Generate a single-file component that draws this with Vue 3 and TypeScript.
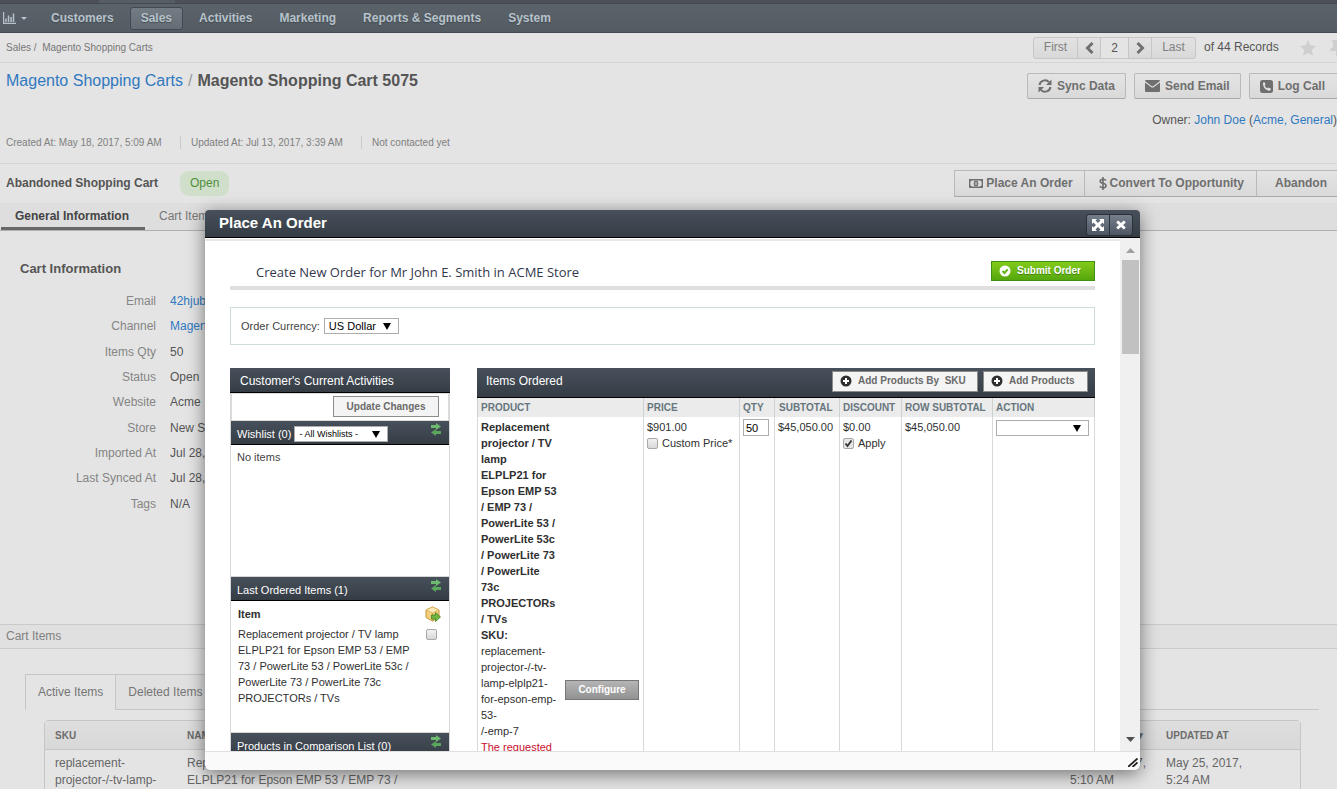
<script setup lang="ts">
import { ref } from 'vue'

interface Field {
  label: string
  value: string
  link?: boolean
}

const menu: string[] = ['Customers', 'Sales', 'Activities', 'Marketing', 'Reports & Segments', 'System']
const currentMenu = ref('Sales')

const fields: Field[] = [
  { label: 'Email', value: '42hjub@example.com', link: true },
  { label: 'Channel', value: 'Magento Channel', link: true },
  { label: 'Items Qty', value: '50' },
  { label: 'Status', value: 'Open' },
  { label: 'Website', value: 'Acme' },
  { label: 'Store', value: 'New Store' },
  { label: 'Imported At', value: 'Jul 28, 2017' },
  { label: 'Last Synced At', value: 'Jul 28, 2017' },
  { label: 'Tags', value: 'N/A' },
]

const productName = [
  'Replacement', 'projector / TV', 'lamp', 'ELPLP21 for', 'Epson EMP 53', '/ EMP 73 /',
  'PowerLite 53 /', 'PowerLite 53c', '/ PowerLite 73', '/ PowerLite', '73c', 'PROJECTORs', '/ TVs', 'SKU:',
].join('\n')
const productSku = ['replacement-', 'projector-/-tv-', 'lamp-elplp21-', 'for-epson-emp-', '53-', '/-emp-7'].join('\n')
const orderedItem = [
  'Replacement projector / TV lamp', 'ELPLP21 for Epson EMP 53 / EMP', '73 / PowerLite 53 / PowerLite 53c /',
  'PowerLite 73 / PowerLite 73c', 'PROJECTORs / TVs',
].join('\n')

const page = ref('2')
const qty = ref('50')
const customPrice = ref(false)
const applyDiscount = ref(true)
const reorder = ref(false)
</script>

<template>
  <div class="page">
    <header class="top">
      <div class="strip"></div>
      <nav class="nav">
        <a href="#" class="dash" aria-label="Dashboards">
          <svg width="13" height="12" viewBox="0 0 13 12"><path d="M.5 0v11.500H13M3 10V6.500M5.500 10V3.500M8 10V5M10.500 10V1.500" fill="none" stroke="currentColor" stroke-width="1.500" /></svg>
          <svg width="6" height="3" viewBox="0 0 6 3"><path d="M0 0h6L3 3z" fill="currentColor" /></svg>
        </a>
        <a v-for="m in menu" :key="m" href="#" class="item" :class="{ on: m === currentMenu }" @click.prevent="currentMenu = m">{{ m }}</a>
      </nav>
    </header>

    <div class="crumbs">
      <div><a href="#">Sales</a> /&nbsp; <a href="#">Magento Shopping Carts</a></div>
      <div class="pager">
        <button class="first">First</button>
        <button class="arrow" aria-label="Previous"><svg width="9" height="12" viewBox="0 0 9 12"><path d="M7.500 1L2.500 6l5 5" fill="none" stroke="#707070" stroke-width="3" /></svg></button>
        <input v-model="page" aria-label="Page number" />
        <button class="arrow" aria-label="Next"><svg width="9" height="12" viewBox="0 0 9 12"><path d="M1.500 1l5 5-5 5" fill="none" stroke="#707070" stroke-width="3" /></svg></button>
        <button class="last">Last</button>
        <span class="of">of 44 Records</span>
        <svg class="star" width="16" height="16" viewBox="0 0 16 16"><path d="M8 0l2.400 5.300 5.600.7-4.200 3.900 1.200 5.800L8 12.900l-5 2.800 1.200-5.800L0 6l5.600-.7z" fill="#cfcfcf" /></svg>
        <svg width="7" height="16" viewBox="0 0 7 16"><path d="M2 0h5v16H6v-5H0q0-3 3-4V2H2z" fill="#cfcfcf" /></svg>
      </div>
    </div>

    <div class="heading">
      <div class="head-left">
        <h1><a href="#">Magento Shopping Carts</a><i>/</i>Magento Shopping Cart 5075</h1>
        <ul>
          <li>Created At: May 18, 2017, 5:09 AM</li>
          <li>Updated At: Jul 13, 2017, 3:39 AM</li>
          <li>Not contacted yet</li>
        </ul>
      </div>
      <div class="head-right">
        <div class="tools">
          <button class="btn">
            <svg width="14" height="14" viewBox="0 0 14 14"><path d="M1.500 6A5.500 5.500 0 0 1 11 3.200M12.500 8A5.500 5.500 0 0 1 3 10.800" fill="none" stroke="currentColor" stroke-width="2" /><path d="M13.500.500V6H8zM.5 13.500V8H6z" fill="currentColor" /></svg>
            Sync Data
          </button>
          <button class="btn">
            <svg width="15" height="12" viewBox="0 0 15 12"><path d="M0 1q0-1 1-1h13q1 0 1 1L8.500 6q-1 .7-2 0z" fill="currentColor" /><path d="M0 2.500L6 7q1.500 1 3 0l6-4.500V11q0 1-1 1H1q-1 0-1-1z" fill="currentColor" /></svg>
            Send Email
          </button>
          <button class="btn cut">
            <svg width="13" height="13" viewBox="0 0 13 13"><rect width="13" height="13" rx="2.500" fill="currentColor" /><path d="M3 3.200Q3 2.300 4.300 2l1.300 2.600-1 1Q5.300 7.300 7.300 8.400l1-1L11 8.700Q10.700 10.300 9.500 10.700 7 11 4.800 8.600 2.800 6.200 3 3.200z" fill="#e4e4e4" /></svg>
            Log Call
          </button>
        </div>
        <div class="owner">Owner: <a href="#">John Doe</a> (<a href="#">Acme, General</a>)</div>
      </div>
    </div>

    <div class="status">
      <div class="status-left"><strong>Abandoned Shopping Cart</strong><span class="pill">Open</span></div>
      <div class="flow">
        <button class="btn place">
          <svg width="14" height="9" viewBox="0 0 14 9"><path d="M.7.700h12.600v7.600H.7z" fill="none" stroke="currentColor" stroke-width="1.400" /><ellipse cx="7" cy="4.500" rx="2.300" ry="3" fill="currentColor" /><path d="M7 3v3" stroke="#e4e4e4" /><path d="M1 1h2L1 3zM13 1h-2l2 2zM1 8h2L1 6zM13 8h-2l2-2z" fill="currentColor" /></svg>
          Place An Order
        </button>
        <button class="btn convert">
          <svg width="8" height="13" viewBox="0 0 8 13"><path d="M4 0v13M7 3.500Q6 2.200 4 2.200 1.200 2.200 1.200 4.200 1.200 5.800 4 6.300 7 6.900 7 8.800 7 10.800 4 10.800 2 10.800 .8 9.300" fill="none" stroke="currentColor" stroke-width="1.600" /></svg>
          Convert To Opportunity
        </button>
        <button class="btn cut abandon">Abandon</button>
      </div>
    </div>

    <div class="tabs"><a href="#" class="on">General Information</a><a href="#">Cart Items</a></div>

    <section class="info">
      <h2>Cart Information</h2>
      <dl>
        <template v-for="f in fields" :key="f.label">
          <dt>{{ f.label }}</dt>
          <dd><a v-if="f.link" href="#">{{ f.value }}</a><template v-else>{{ f.value }}</template></dd>
        </template>
      </dl>
    </section>

    <section class="cart">
      <h2>Cart Items</h2>
      <div class="subtabs"><a href="#" class="on">Active Items</a><a href="#">Deleted Items</a></div>
      <div class="grid">
        <table>
          <colgroup><col class="c1" /><col /><col class="c3" /><col class="c4" /></colgroup>
          <thead><tr><th>SKU</th><th>NAME</th><th>CREATED AT ▼</th><th>UPDATED AT</th></tr></thead>
          <tbody>
            <tr>
              <td>replacement-<br />projector-/-tv-lamp-</td>
              <td>Replacement projector / TV lamp<br />ELPLP21 for Epson EMP 53 / EMP 73 /</td>
              <td>May 25, 2017,<br />5:10 AM</td>
              <td>May 25, 2017,<br />5:24 AM</td>
            </tr>
          </tbody>
        </table>
      </div>
    </section>

    <div class="modal" role="dialog" aria-labelledby="dialog-title">
      <div class="bar">
        <h2 id="dialog-title">Place An Order</h2>
        <div class="winbtns">
          <button aria-label="Maximize"><svg width="12" height="12" viewBox="0 0 12 12"><path d="M0 0h5L3.500 1.500 6 4l2.500-2.500L7 0h5v5l-1.500-1.500L8 6l2.500 2.500L12 7v5H7l1.500-1.500L6 8l-2.500 2.500L5 12H0V7l1.500 1.500L4 6 1.500 3.500 0 5z" fill="#fff" /></svg></button>
          <button aria-label="Close"><svg width="10" height="10" viewBox="0 0 10 10"><path d="M1.200 1.500l7.600 7M8.800 1.500l-7.600 7" stroke="#fff" stroke-width="3" /></svg></button>
        </div>
      </div>

      <div class="viewport">
        <div class="content">
          <div class="order-head">
            <h3>Create New Order for Mr John E. Smith in ACME Store</h3>
            <button class="submit">
              <svg width="12" height="12" viewBox="0 0 12 12"><circle cx="6" cy="6" r="5.500" fill="#fff" /><path d="M3.500 6l2 2 3.200-3.700" fill="none" stroke="#62b515" stroke-width="2" /></svg>
              Submit Order
            </button>
          </div>
          <div class="currency">
            <label for="currency">Order Currency:</label>
            <span class="drop usd"><select id="currency"><option>US Dollar</option></select></span>
          </div>

          <div class="cols">
            <aside>
              <h4>Customer's Current Activities</h4>
              <div class="side">
                <div class="update"><button class="plain change">Update Changes</button></div>
                <div class="sub">
                  <label for="wish">Wishlist (0)</label>
                  <span class="drop wish"><select id="wish"><option>- All Wishlists -</option></select></span>
                  <button class="refresh" aria-label="Refresh wishlist"><svg width="12" height="13" viewBox="0 0 12 13"><path d="M1 2h5V0l5 3.500L6 7V5H1z" fill="#6cba70" /><path d="M11 8H6V6L1 9.500 6 13v-2h5z" fill="#5aa65c" /></svg></button>
                </div>
                <div class="empty">No items</div>
                <div class="sub lined">
                  <span>Last Ordered Items (1)</span>
                  <button class="refresh" aria-label="Refresh last ordered items"><svg width="12" height="13" viewBox="0 0 12 13"><path d="M1 2h5V0l5 3.500L6 7V5H1z" fill="#6cba70" /><path d="M11 8H6V6L1 9.500 6 13v-2h5z" fill="#5aa65c" /></svg></button>
                </div>
                <div class="last-items">
                  <div class="row">
                    <b>Item</b>
                    <svg width="16" height="16" viewBox="0 0 16 16"><path d="M7.500 1L14 4v7.500L7.500 15 1 11.500V4z" fill="#f3cf7d" stroke="#c99638" /><path d="M7.500 1L14 4 7.500 7 1 4z" fill="#fbe9b8" stroke="#d8ab52" stroke-width=".8" /><path d="M7.500 7v8" stroke="#d8ab52" /><path d="M6.500 9h4V6.500L15.500 11l-5 4.500V13h-4z" fill="#6fb53f" stroke="#3c8422" stroke-width=".8" /></svg>
                  </div>
                  <div class="row">
                    <label for="reorder" class="pre">{{ orderedItem }}</label>
                    <input id="reorder" v-model="reorder" type="checkbox" class="chk" />
                  </div>
                </div>
                <div class="sub lined">
                  <span>Products in Comparison List (0)</span>
                  <button class="refresh" aria-label="Refresh comparison list"><svg width="12" height="13" viewBox="0 0 12 13"><path d="M1 2h5V0l5 3.500L6 7V5H1z" fill="#6cba70" /><path d="M11 8H6V6L1 9.500 6 13v-2h5z" fill="#5aa65c" /></svg></button>
                </div>
              </div>
            </aside>

            <div class="ordered">
              <div class="ordered-head">
                <h4>Items Ordered</h4>
                <button class="plain add wide"><svg width="12" height="12" viewBox="0 0 12 12"><circle cx="6" cy="6" r="5.500" fill="#2f2f2f" /><path d="M6 3v6M3 6h6" stroke="#fff" stroke-width="2" /></svg>Add Products By&nbsp; SKU</button>
                <button class="plain add"><svg width="12" height="12" viewBox="0 0 12 12"><circle cx="6" cy="6" r="5.500" fill="#2f2f2f" /><path d="M6 3v6M3 6h6" stroke="#fff" stroke-width="2" /></svg>Add Products</button>
              </div>
              <table>
                <colgroup><col class="w-prod" /><col class="w-price" /><col class="w-qty" /><col class="w-sub" /><col class="w-disc" /><col class="w-row" /><col /></colgroup>
                <thead><tr><th>PRODUCT</th><th>PRICE</th><th>QTY</th><th>SUBTOTAL</th><th>DISCOUNT</th><th>ROW SUBTOTAL</th><th>ACTION</th></tr></thead>
                <tbody>
                  <tr>
                    <td>
                      <div class="product">
                        <div class="pre"><b>{{ productName }}</b><br />{{ productSku }}<br /><span class="error">The requested</span></div>
                        <button class="configure">Configure</button>
                      </div>
                    </td>
                    <td>$901.00<label class="tick"><input v-model="customPrice" type="checkbox" class="chk" />Custom Price*</label></td>
                    <td><input v-model="qty" class="qty" aria-label="Quantity" /></td>
                    <td>$45,050.00</td>
                    <td>$0.00<label class="tick"><input v-model="applyDiscount" type="checkbox" class="chk" />Apply</label></td>
                    <td>$45,050.00</td>
                    <td><span class="drop action"><select aria-label="Action"><option></option></select></span></td>
                  </tr>
                </tbody>
              </table>
            </div>
          </div>
        </div>
        <div class="scroll">
          <svg width="9" height="5" viewBox="0 0 9 5"><path d="M0 5h9L4.500 0z" fill="#a0a0a0" /></svg>
          <div class="thumb"></div>
          <svg class="down" width="9" height="5" viewBox="0 0 9 5"><path d="M0 0h9L4.500 5z" fill="#505050" /></svg>
        </div>
      </div>
      <div class="foot">
        <svg width="10" height="9" viewBox="0 0 10 9"><path d="M0 9l9.500-8.500M4.500 9l5-4.500" stroke="#222" stroke-width="1.800" /></svg>
      </div>
    </div>
  </div>
</template>

<style>
html, body { margin: 0; background: #e4e4e4; }
</style>

<style scoped>
* { box-sizing: border-box; }
.page { position: relative; height: 100vh; overflow: hidden; background: #e4e4e4; color: #555; font: 12px/17px "Liberation Sans", Arial, sans-serif; }
a { color: #3079c0; text-decoration: none; }
h1, h2, h3, h4, ul, dl, dd { margin: 0; padding: 0; }
button, input, select { font: inherit; margin: 0; border-radius: 0; }
svg { flex: none; }

.strip { height: 4px; background: linear-gradient(90deg, #4e5058 99px, #565d65 99px, #565d65 175px, #4e5058 175px); border-bottom: 1px solid #434a52; }
.nav { display: flex; align-items: center; gap: 5px; height: 29px; padding-left: 3px; background: linear-gradient(#5b636a, #555b62); border-bottom: 1px solid #444b53; }
.nav a { color: #b7c3cb; font-weight: bold; }
.dash { display: flex; align-items: center; gap: 5px; width: 32px; }
.item { padding: 1px 10px 2px; border: 1px solid transparent; border-radius: 3px; line-height: 18px; text-shadow: 0 1px 1px #444b53; }
.item.on { background: linear-gradient(#737b84, #656c74); border-color: #42484f; }

.crumbs { display: flex; justify-content: space-between; align-items: center; height: 30px; padding-left: 6px; border-bottom: 1px solid #d6d6d6; font-size: 10px; }
.crumbs a { color: #777; }
.crumbs > div:first-child { color: #777; }
.pager { display: flex; align-items: center; font-size: 12px; }
.pager button { height: 22px; padding: 0; border: 1px solid #c6c6c6; background: linear-gradient(#e2e2e2, #d9d9d9); color: #808080; }
.pager .first { width: 45px; border-radius: 3px 0 0 3px; }
.pager .arrow { width: 23px; border-left: 0; display: flex; align-items: center; justify-content: center; }
.pager .last { width: 44px; border-left: 0; border-radius: 0 3px 3px 0; }
.pager input { width: 28px; height: 22px; border: 1px solid #c6c6c6; border-left: 0; background: #e4e4e4; text-align: center; color: #555; padding: 0; }
.of { margin: 0 20px 0 8px; width: 76px; white-space: nowrap; }
.star { margin-right: 14px; }

.heading { display: flex; justify-content: space-between; height: 101px; padding: 10px 0 0 6px; border-bottom: 1px solid #d6d6d6; }
h1 { font-size: 16px; line-height: 16px; color: #555; }
h1 a { font-weight: normal; }
h1 i { font-style: normal; font-weight: normal; color: #999; margin: 0 5px; }
.head-left ul { display: flex; list-style: none; margin-top: 47px; font-size: 10px; line-height: 13px; color: #808080; }
.head-left li { width: 185px; }
.head-left li + li { border-left: 1px solid #cbcbcb; padding-left: 10px; margin-left: -11px; }
.head-left li:nth-child(2) { width: 192px; }
.tools { display: flex; justify-content: flex-end; gap: 8px; }
.btn { display: flex; align-items: center; gap: 5px; height: 26px; padding: 0 10px; border: 1px solid #b9b9b9; border-bottom-color: #a9a9a9; border-radius: 2px; background: linear-gradient(#e4e4e4, #d9d9d9); color: #6f6f6f; font-weight: bold; white-space: nowrap; }
.btn.cut { padding-right: 12px; border-right: 0; border-radius: 2px 0 0 2px; }
.owner { margin-top: 13px; text-align: right; }

.status { display: flex; justify-content: space-between; height: 39px; padding: 6px 0 0 6px; }
.status-left { display: flex; align-items: center; height: 26px; gap: 22px; }
.pill { padding: 4px 10px; border-radius: 9px; background: #cfdfc9; color: #4f8f3c; }
.flow { display: flex; }
.flow .btn { height: 27px; gap: 3px; border-radius: 0; }
.flow .place { padding: 0 11px 0 14px; }
.flow .convert { padding: 0 12px 0 14px; border-left: 0; }
.flow .abandon { padding: 0 10px 0 18px; border-left: 0; }

.tabs { display: flex; height: 28px; padding-left: 1px; background: #dedede; border-bottom: 1px solid #b0b0b0; line-height: 26px; }
.tabs a { padding: 0 14px; color: #777; }
.tabs .on { min-width: 144px; color: #444; font-weight: bold; border-bottom: 3px solid #686868; height: 27px; }

.info { height: 393px; padding: 29px 0 0 20px; }
.info h2 { font-size: 13px; line-height: 17px; }
.info dl { display: grid; grid-template-columns: 136px 1fr; column-gap: 14px; height: 228px; margin-top: 12px; align-items: center; }
dt { text-align: right; color: #858585; }

.cart h2 { height: 25px; padding-left: 6px; border: 1px solid #cacaca; border-width: 1px 0; background: #e0e0e0; font-size: 12px; line-height: 23px; font-weight: normal; color: #808080; }
.subtabs { display: flex; margin: 25px 18px 0 25px; height: 36px; border-bottom: 1px solid #c6c6c6; }
.subtabs a { padding: 0 12px; border-top: 1px solid #c6c6c6; border-right: 1px solid #c6c6c6; line-height: 34px; color: #757575; background: #e0e0e0; }
.subtabs .on { height: 36px; border-left: 1px solid #c6c6c6; background: #e4e4e4; }
.grid { margin: 10px 36px 0 44px; border: 1px solid #c6c6c6; border-radius: 4px 4px 0 0; }
table { width: 100%; table-layout: fixed; border-collapse: separate; border-spacing: 0; text-align: left; }
.grid .c1 { width: 132px; }
.grid .c3 { width: 96px; }
.grid .c4 { width: 144px; }
.grid th { height: 29px; padding: 2px 10px 0; border-bottom: 1px solid #c6c6c6; background: linear-gradient(#dedede, #d8d8d8); font-size: 10px; line-height: 16px; color: #6c6c6c; white-space: nowrap; }
.grid td { padding: 5px 10px 20px; white-space: nowrap; vertical-align: top; color: #666; }

.modal { position: absolute; inset: 210px 197px 19px 205px; display: flex; flex-direction: column; border-radius: 4px 4px 6px 6px; background: #fff; box-shadow: 0 4px 18px rgba(0, 0, 0, .5); overflow: hidden; color: #2f2f2f; font-size: 11px; line-height: 16px; }
.bar { flex: none; display: flex; justify-content: space-between; height: 28px; padding: 4px 7px 0 14px; border-bottom: 1px solid #000; background: linear-gradient(#47505b, #353c44); }
.bar h2 { font-size: 15px; line-height: 18px; color: #fff; }
.winbtns { display: flex; }
.winbtns button { display: flex; align-items: center; justify-content: center; width: 24px; height: 22px; padding: 0; border: 1px solid #2b3138; border-radius: 3px 0 0 3px; background: linear-gradient(#757f8b, #4d5662); }
.winbtns button + button { border-left: 0; border-radius: 0 3px 3px 0; width: 23px; }
.viewport { flex: 1; min-height: 0; display: flex; overflow: hidden; }
.content { flex: 1; min-width: 0; margin-top: 1px; padding: 18px 25px 0; border-top: 2px solid #e8e8e8; }
.scroll { display: flex; flex-direction: column; align-items: center; width: 20px; padding: 10px 0 9px 1px; background: #f0f0f0; }
.thumb { width: 17px; height: 94px; margin-top: 7px; background: #c1c1c1; }
.scroll .down { margin-top: auto; }
.foot { flex: none; display: flex; justify-content: flex-end; align-items: flex-end; height: 19px; padding: 0 2px 3px; border-top: 1px solid #e0e0e0; background: #fafafa; }

.order-head { display: flex; justify-content: space-between; height: 31px; padding: 2px 0 0 26px; border-bottom: 4px solid #dfdfdf; }
.order-head h3 { font: 13px/23px "Open Sans", "Noto Sans", sans-serif; color: #33384d; }
.submit { display: flex; align-items: center; gap: 6px; width: 104px; height: 20px; padding: 0 7px; border: 1px solid #3f8f13; background: linear-gradient(#83cb1b, #55a70c); color: #fff; font-size: 10px; font-weight: bold; white-space: nowrap; text-shadow: 0 1px 0 #3f8013; }
.currency { display: flex; align-items: center; gap: 4px; height: 38px; margin-top: 17px; padding-left: 10px; border: 1px solid #cddddd; color: #444; }
.drop { position: relative; display: block; }
.drop::after { content: ""; position: absolute; right: 8px; top: 5px; border: 4px solid transparent; border-top: 7px solid #000; border-bottom: 0; pointer-events: none; }
.drop select { display: block; width: 100%; height: 16px; padding: 0 4px; border: 1px solid #adadad; background: #fff; appearance: none; color: #000; line-height: 14px; }
.usd { width: 75px; }
.wish { width: 94px; }
.wish select { font-size: 9px; }
.action { width: 93px; margin-top: 1px; }

.cols { display: flex; align-items: flex-start; gap: 27px; margin-top: 23px; }
aside { width: 220px; flex: none; }
h4 { font-size: 12px; font-weight: normal; color: #fff; }
aside h4 { height: 25px; padding: 1px 10px 0; line-height: 25px; border-bottom: 1px solid #000; background: linear-gradient(#47505b, #353c44); }
.side { border: 1px solid #d6d6d6; border-width: 0 1px; }
.update { display: flex; justify-content: flex-end; height: 28px; padding: 2px 9px 0 0; border: 1px solid #dcdcdc; }
.plain { height: 21px; padding: 0 11px; border: 1px solid #8c8c8c; background: #f4f4f4; color: #6a6a6a; font-size: 10px; font-weight: bold; white-space: nowrap; }
.change { width: 106px; }
.sub { display: flex; align-items: center; gap: 3px; height: 24px; padding: 2px 7px 0 6px; border-bottom: 1px solid #000; background: linear-gradient(#47505b, #353c44); color: #fff; }
.sub.lined { box-shadow: 0 -1px 0 #d6d6d6; }
.refresh { display: flex; align-self: flex-start; margin-left: auto; padding: 0; border: 0; background: none; }
.empty { height: 132px; padding: 4px 6px; color: #444; }
.last-items { height: 132px; padding: 5px 7px 0; }
.last-items .row { display: flex; justify-content: space-between; align-items: flex-start; padding-right: 1px; }
.last-items .row + .row { padding: 4px 5px 0 0; }
.pre { white-space: pre; }
.chk { appearance: none; width: 11px; height: 11px; border: 1px solid #a8a8a8; border-radius: 2px; background: linear-gradient(#f2f2f2, #d8d8d8); }
.row .chk { margin-top: 3px; }
.chk:checked { background: #e6e6e6 url("data:image/svg+xml,%3Csvg xmlns='http://www.w3.org/2000/svg' viewBox='0 0 9 9'%3E%3Cpath d='M1.500 4.500l2 2.500 4-5.500' fill='none' stroke='%23333' stroke-width='1.800'/%3E%3C/svg%3E") center / 9px 9px no-repeat; }

.ordered { flex: 1; min-width: 0; }
.ordered-head { display: flex; align-items: center; gap: 5px; height: 30px; padding: 0 7px 3px 9px; border-bottom: 1px solid #000; background: linear-gradient(#47505b, #353c44); }
.ordered-head h4 { margin-right: auto; line-height: 18px; }
.add { display: flex; align-items: center; gap: 6px; width: 105px; padding: 0 0 0 7px; }
.add.wide { width: 146px; }
.ordered .w-prod { width: 167px; }
.ordered .w-price { width: 96px; }
.ordered .w-qty { width: 35px; }
.ordered .w-sub { width: 65px; }
.ordered .w-disc { width: 62px; }
.ordered .w-row { width: 91px; }
.ordered th { height: 19px; padding: 1px 0 0 3px; background: #ebebeb; border-right: 1px solid #ccd2d2; font-size: 10px; line-height: 16px; color: #67767e; white-space: nowrap; }
.ordered td { padding: 2px 3px; border-right: 1px solid #d5dbdb; vertical-align: top; white-space: nowrap; }
.ordered th:first-child { border-left: 1px solid #ccd2d2; }
.ordered td:first-child { padding-right: 4px; border-left: 1px solid #d5dbdb; }
.ordered th:nth-child(4) { padding-left: 4px; }
.product { display: flex; justify-content: space-between; align-items: flex-start; }
.error { color: #c8102e; }
.configure { width: 74px; height: 20px; margin-top: 261px; padding: 0; border: 1px solid #777; background: linear-gradient(#b5b5b5, #929292); color: #fff; font-size: 10px; font-weight: bold; }
.tick { display: flex; align-items: center; gap: 4px; }
.qty { display: block; width: 26px; height: 17px; padding: 0 2px; border: 1px solid #adadad; color: #000; }
</style>
